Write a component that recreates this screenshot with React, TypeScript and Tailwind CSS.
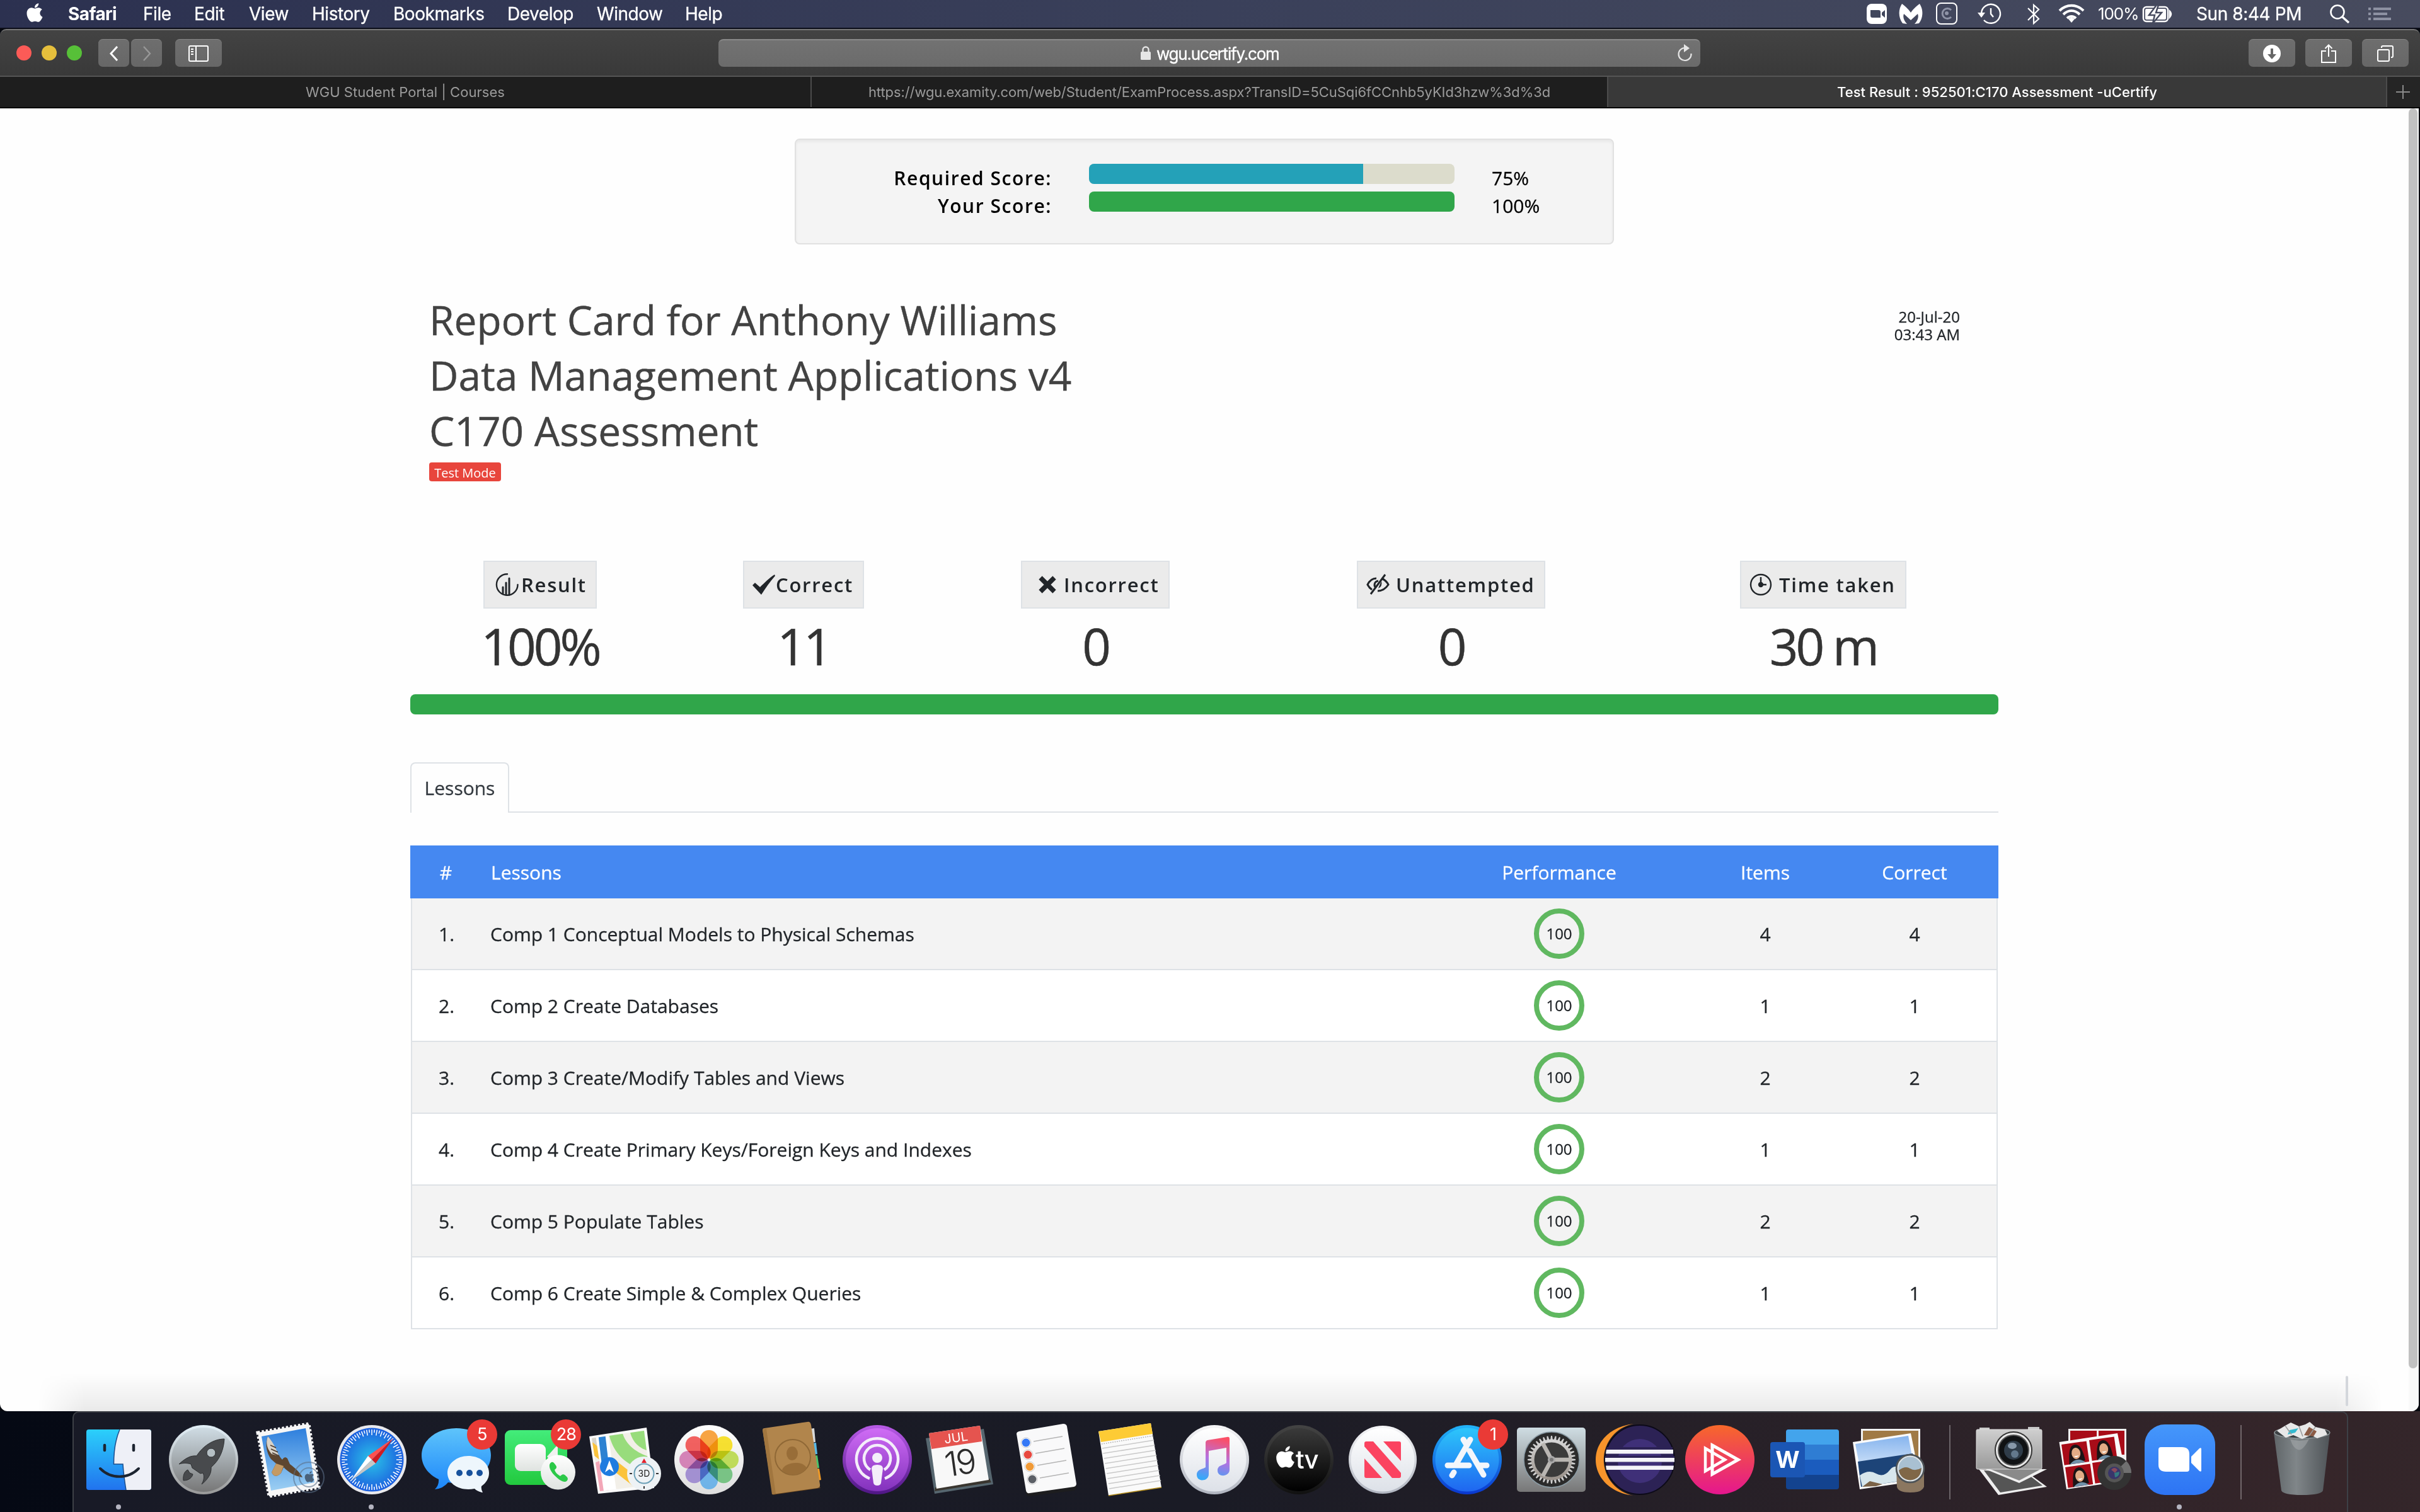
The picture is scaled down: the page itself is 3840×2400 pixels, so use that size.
import React from "react";
import { FaApple } from "react-icons/fa";

type Kids = { children?: React.ReactNode };

/* ---------- macOS menu bar ---------- */

const menus = [
  { label: "File", cls: "ml-[37px] w-[44px]" },
  { label: "Edit", cls: "ml-[37px] w-[49px]" },
  { label: "View", cls: "ml-[38px] w-[62px]" },
  { label: "History", cls: "ml-[38px] w-[91px]" },
  { label: "Bookmarks", cls: "ml-[38px] w-[143px]" },
  { label: "Develop", cls: "ml-[38px] w-[104px]" },
  { label: "Window", cls: "ml-[38px] w-[102px]" },
  { label: "Help", cls: "ml-[38px] w-[59px]" },
];

function MenuBar() {
  return (
    <div className="flex h-[46px] shrink-0 items-start border-b-2 border-[#0b0d18] bg-linear-to-r from-[#2c3150] via-[#3a405a] to-[#474b5e] text-[28px] leading-[44px] whitespace-nowrap text-white">
      <FaApple className="mt-[3px] ml-[40px] h-[34px] w-[30px]" />
      <span className="ml-[38px] w-[82px] font-bold tracking-[-0.6px]">Safari</span>
      {menus.map((m) => (
        <span key={m.label} className={`tracking-[-0.45px] [-webkit-text-stroke:0.3px] ${m.cls}`}>
          {m.label}
        </span>
      ))}
      <div className="flex-1" />
      <svg className="w-[370px] shrink-0" height="44" viewBox="2950 0 370 44" fill="none" stroke="#fff" strokeWidth="2">
        <rect x="2962" y="6" width="32" height="32" rx="8" fill="#fff" stroke="none" />
        <path d="M2968 16h13q3 0 3 3v9h-13q-3 0-3-3zM2986 20l5-4v12l-5-4z" fill="#40465c" stroke="none" />
        <path d="M3019 37c-7-9-7-22-1-31 3 2 10 8 14 14 4-6 11-12 14-14 6 9 6 22-1 31l-7 1c5-5 7-11 5-16l-11 10-11-10c-2 5 0 11 5 16z" fill="#fff" stroke="none" />
        <rect x="3073" y="5" width="32" height="33" rx="7" />
        <path d="M3096 16a8 8 0 1 0 0 11" stroke="#8e93a6" strokeWidth="3" />
        <circle cx="3089" cy="21" r="3" fill="#8e93a6" stroke="none" />
        <path d="M3144 21a15 15 0 1 1 4 11M3159 13v9l4 5" strokeWidth="2.4" />
        <path d="M3138 20h12l-6 8z" fill="#fff" stroke="none" />
        <path d="M3218 13l17 17-8 7V8l8 7-17 17" strokeWidth="2.2" />
        <path d="M3268 17c11-11 27-11 38 0M3274 23c8-8 18-8 26 0M3280 29c4-4 10-4 14 0" strokeWidth="4" />
        <path d="M3282 30l5 6 5-6q-5-4-10 0z" fill="#fff" stroke="none" />
      </svg>
      <span className="ml-[9px] w-[61px] text-[26px] tracking-[-1.100px]">100%</span>
      <svg className="w-[95px] shrink-0" height="44" viewBox="3390 0 95 44" fill="none" stroke="#fff" strokeWidth="2.5">
        <rect x="3401" y="11" width="39" height="23" rx="5" />
        <rect x="3404" y="14" width="33" height="17" rx="2" fill="#fff" stroke="none" />
        <path d="M3422 8l-12 16h9l-3 13 14-17h-9l4-12z" fill="#fff" stroke="#454a5e" strokeWidth="2.5" />
        <path d="M3443 18q4 4 0 9z" fill="#fff" />
      </svg>
      <span className="w-[172px] tracking-[-0.4px] [-webkit-text-stroke:0.3px]">Sun 8:44 PM</span>
      <svg className="mr-[40px] w-[143px] shrink-0" height="44" viewBox="3657 0 143 44" fill="none" stroke="#fff" strokeWidth="2.6">
        <circle cx="3709" cy="19" r="10.5" />
        <path d="M3717 27l10 9" strokeWidth="3.4" />
        <path d="M3758 14h4M3766 14h28M3758 22h4M3766 22h22M3758 30h4M3766 30h28" stroke="#8d91a2" strokeWidth="4" />
      </svg>
    </div>
  );
}

/* ---------- Safari chrome ---------- */

function ToolButton({ children, cls }: Kids & { cls: string }) {
  return (
    <div className={`flex h-[44px] items-center justify-center rounded-[7px] border-t border-[#858585] bg-linear-to-b from-[#6e6e6e] to-[#676767] ${cls}`}>
      {children}
    </div>
  );
}

function Toolbar() {
  return (
    <div className="flex h-[76px] shrink-0 items-center rounded-t-[10px] border-t-2 border-b-2 border-t-[#777] border-b-[#555] bg-linear-to-b from-[#434343] to-[#393939]">
      <span className="ml-[26px] size-[24px] rounded-full bg-[#fc5b57]" />
      <span className="ml-[16px] size-[24px] rounded-full bg-[#e5bf3c]" />
      <span className="ml-[16px] size-[24px] rounded-full bg-[#57c038]" />
      <ToolButton cls="ml-[26px] w-[49px]">
        <svg width="20" height="28" fill="none" stroke="#fff" strokeWidth="3"><path d="M15 3L5 14l10 11" /></svg>
      </ToolButton>
      <ToolButton cls="ml-[3px] w-[49px]">
        <svg width="20" height="28" fill="none" stroke="#989898" strokeWidth="2.4"><path d="M5 3l10 11L5 25" /></svg>
      </ToolButton>
      <ToolButton cls="ml-[21px] w-[74px]">
        <svg width="32" height="26" fill="none" stroke="#fff" strokeWidth="2"><rect x="1" y="1" width="30" height="24" rx="2" /><path d="M12 1v24M4 6h4M4 10h4M4 14h4" /></svg>
      </ToolButton>
      <div className="ml-[788px] flex h-[44px] w-[1558px] items-center rounded-[8px] border-t-2 border-[#8a8a8a] bg-linear-to-b from-[#727272] to-[#6b6b6b] text-[26px] text-white">
        <svg className="ml-[668px]" width="20" height="24"><rect x="2" y="9" width="16" height="13" rx="1.5" fill="#e6e6e6" /><path d="M5.500 10V6a4.500 4.500 0 0 1 9 0v4" fill="none" stroke="#e6e6e6" strokeWidth="2.4" /></svg>
        <span className="ml-[7px] w-[201px] tracking-[-1.200px] [-webkit-text-stroke:0.3px]">wgu.ucertify.com</span>
        <svg className="ml-[623px]" width="30" height="32" fill="none" stroke="#e6e6e6" strokeWidth="2.2"><path d="M24.500 16a10 10 0 1 1-10-9" /><path d="M13 1l9 6.500-9 6.500z" fill="#e6e6e6" stroke="none" /></svg>
      </div>
      <ToolButton cls="ml-[870px] w-[74px]">
        <svg width="28" height="28"><circle cx="14" cy="14" r="14" fill="#fff" /><path d="M12 6h4v9h5l-7 8-7-8h5z" fill="#666" /></svg>
      </ToolButton>
      <ToolButton cls="ml-[16px] w-[74px]">
        <svg width="26" height="32" fill="none" stroke="#fff" strokeWidth="2"><path d="M9 12H2v18h22V12h-7M13 21V3M7.500 8L13 2.500 18.500 8" /></svg>
      </ToolButton>
      <ToolButton cls="ml-[16px] w-[74px]">
        <svg width="28" height="28" fill="none" stroke="#fff" strokeWidth="2"><rect x="2" y="8" width="18" height="18" rx="2" /><path d="M8 5V4q0-2 2-2h14q2 0 2 2v14q0 2-2 2h-1" /></svg>
      </ToolButton>
    </div>
  );
}

function TabStrip() {
  return (
    <div className="flex h-[50px] shrink-0 border-b-2 border-black bg-[#1e1e1e] text-center text-[22px] leading-[48px] whitespace-nowrap text-[#9b9b9b]">
      <div className="w-[1288px] border-r-2 border-[#4b4b4b] tracking-[0.050px]">WGU Student Portal | Courses</div>
      <div className="w-[1264px] border-r-2 border-[#4b4b4b] tracking-[-0.08px]">https://wgu.examity.com/web/Student/ExamProcess.aspx?TransID=5CuSqi6fCCnhb5yKId3hzw%3d%3d</div>
      <div className="w-[1236px] border-r-2 border-[#4b4b4b] bg-[#393939] font-medium tracking-[0.020px] text-white">Test Result : 952501:C170 Assessment -uCertify</div>
      <div className="flex flex-1 items-center justify-center bg-[#252525] pr-[2px]">
        <svg width="24" height="24" stroke="#8a8a8a" strokeWidth="2"><path d="M12 1v22M1 12h22" /></svg>
      </div>
    </div>
  );
}

/* ---------- Report card ---------- */

function ScoreRow({ label, value, pct, bar }: { label: string; value: string; pct: number; bar: string }) {
  return (
    <div className="flex h-[44px] text-[30px] leading-[46px] text-black">
      <span className="w-[406px] text-right font-semibold tracking-[1.550px]">{label}</span>
      <div className="ml-[59px] h-[32px] w-[580px] overflow-hidden rounded-[8px] bg-[#dcdccc]">
        <div className={`h-full ${bar}`} style={{ width: `${pct}%` }} />
      </div>
      <span className="ml-[59px] [-webkit-text-stroke:0.3px]">{value}</span>
    </div>
  );
}

const ink = "#212529";

const stats = [
  {
    label: "Result",
    value: "100%",
    box: "ml-[116px] w-[180px]",
    gap: "ml-[3px]",
    icon: (
      <svg className="ml-[4px]" width="38" height="38" fill="none" stroke={ink} strokeWidth="2.4" strokeLinecap="round"><path d="M19 2.200A16.800 16.800 0 1 0 35.500 19" /><path d="M12 33v-10M17 35V16M22 35V9" strokeWidth="3" /></svg>
    ),
  },
  {
    label: "Correct",
    value: "11",
    box: "ml-[232px] w-[192px]",
    gap: "ml-0",
    icon: <svg width="37" height="34"><path d="M0 18l4-4 8 7C19 14 27 6 35 1l1 2C28 12 21 22 14 33z" fill={ink} /></svg>,
  },
  {
    label: "Incorrect",
    value: "0",
    box: "ml-[249px] w-[236px]",
    gap: "ml-[11px]",
    icon: <svg className="ml-[13px]" width="29" height="28" stroke={ink} strokeWidth="7.500"><path d="M3 3l22 22M25 3L3 25" /></svg>,
  },
  {
    label: "Unattempted",
    value: "0",
    box: "ml-[297px] w-[299px]",
    gap: "ml-[9px]",
    icon: (
      <svg width="38" height="36" fill="none" stroke={ink} strokeWidth="3"><path d="M16 8C10 8 5 12 2 18c2 4 4 6 7 8M24 8c5 2 9 6 11 10-4 6-10 10-17 10M30 2L7 33M19 12c-7 1-7 8-4 11" /><path d="M19 24q7-3 5-12z" fill={ink} stroke="none" /></svg>
    ),
  },
  {
    label: "Time taken",
    value: "30 m",
    box: "ml-[309px] w-[264px]",
    gap: "ml-[11px]",
    icon: <svg width="36" height="36" fill="none" stroke={ink} strokeWidth="2.4"><circle cx="18" cy="18" r="16" /><path d="M18 6v12h9" strokeWidth="2.500" /><circle cx="18" cy="18" r="3" fill={ink} /></svg>,
  },
];

const lessons = [
  { name: "Comp 1 Conceptual Models to Physical Schemas", n: 4 },
  { name: "Comp 2 Create Databases", n: 1 },
  { name: "Comp 3 Create/Modify Tables and Views", n: 2 },
  { name: "Comp 4 Create Primary Keys/Foreign Keys and Indexes", n: 1 },
  { name: "Comp 5 Populate Tables", n: 2 },
  { name: "Comp 6 Create Simple & Complex Queries", n: 1 },
];

function Report() {
  return (
    <div className="flex w-[3822px] flex-col pl-[651px] font-['Open_Sans',sans-serif] text-[#212529]">
      <div className="mt-[48px] ml-[610px] h-[168px] w-[1300px] rounded-[8px] border-2 border-[#e1e1e1] bg-[#f4f4f4] pt-[38px] shadow-[inset_0_3px_4px_rgba(0,0,0,0.05)]">
        <ScoreRow label="Required Score:" value="75%" pct={75} bar="bg-[#24a1b8]" />
        <ScoreRow label="Your Score:" value="100%" pct={100} bar="bg-[#30a64a]" />
      </div>

      <div className="mt-[76px] flex h-[300px] w-[2520px] justify-between pr-[61px] pl-[30px]">
        <div>
          <h1 className="text-[64px] leading-[88px] text-[#424242] [-webkit-text-stroke:0.4px]">
            Report Card for Anthony Williams
            <br />
            Data Management Applications v4
            <br />
            C170 Assessment
          </h1>
          <span className="mt-[6px] block h-[30px] w-[114px] rounded-[4px] bg-[#e8453c] text-center text-[20px] leading-[33px] text-white">Test Mode</span>
        </div>
        <div className="mt-[25px] text-right text-[24px] leading-[28px] [-webkit-text-stroke:0.3px]">
          20-Jul-20
          <br />
          03:43 AM
        </div>
      </div>

      <div className="mt-[126px] flex w-[2520px]">
        {stats.map((s) => (
          <div key={s.label} className={`flex flex-col items-center ${s.box}`}>
            <div className="flex h-[76px] w-full items-center border-2 border-[#dee2e6] bg-[#ebebeb] pl-[13px] whitespace-nowrap">
              {s.icon}
              <span className={`text-[31px] leading-[72px] font-semibold tracking-[1.750px] ${s.gap}`}>{s.label}</span>
            </div>
            <span className="mt-[11px] text-[80px] leading-[96px] tracking-[-4px] whitespace-nowrap text-[#333] [-webkit-text-stroke:0.5px]">{s.value}</span>
          </div>
        ))}
      </div>
      <div className="mt-[29px] h-[32px] w-[2520px] rounded-[8px] bg-[#30a64a]" />

      <div className="mt-[76px] flex h-[80px] w-[2520px]">
        <div className="w-[157px] rounded-t-[8px] border-2 border-b-0 border-[#dee2e6] text-center text-[30px] leading-[78px] text-[#343a40] [-webkit-text-stroke:0.3px]">Lessons</div>
        <div className="flex-1 border-b-2 border-[#dee2e6]" />
      </div>

      <div className="mt-[52px] w-[2520px] [-webkit-text-stroke:0.3px]">
        <div className="grid h-[84px] grid-cols-[113px_1487px_446px_208px_266px] items-center bg-[#4588f1] text-center text-[30px] text-white">
          <span>#</span>
          <span className="pl-[15px] text-left">Lessons</span>
          <span>Performance</span>
          <span>Items</span>
          <span>Correct</span>
        </div>
        {lessons.map((l, i) => (
          <div
            key={l.name}
            className="mx-px grid h-[114px] grid-cols-[109px_1488px_446px_208px_266px] items-center border-x-2 border-b-2 border-[#dee2e6] text-center text-[30px] odd:bg-white even:bg-[#f3f3f3]"
          >
            <span>{i + 1}.</span>
            <span className="pl-[15px] text-left">{l.name}</span>
            <span className="mx-auto flex size-[80px] items-center justify-center rounded-full border-8 border-[#60b860] text-[24px]">100</span>
            <span>{l.n}</span>
            <span>{l.n}</span>
          </div>
        ))}
      </div>
    </div>
  );
}

/* ---------- Dock ---------- */

function Slot({ children, badge, dot }: Kids & { badge?: string; dot?: boolean }) {
  return (
    <div className="relative h-[158px] w-[133.700px] shrink-0">
      <svg width="134" height="158" viewBox="0 0 134 158" className="overflow-visible">
        {children}
        {dot && <circle cx="66" cy="150" r="4" fill="#b4b4c0" />}
      </svg>
      {badge && (
        <span className="absolute top-[11px] left-[84px] size-[48px] rounded-full bg-[#ea3a36] text-center text-[27px] leading-[48px] tracking-[-1px] text-white">{badge}</span>
      )}
    </div>
  );
}

function Divider() {
  return (
    <div className="flex w-[61px] shrink-0 justify-center pt-[20px]">
      <div className="h-[118px] w-[2px] bg-white/30" />
    </div>
  );
}

function Grad({ id, a, b }: { id: string; a: string; b: string }) {
  return (
    <linearGradient id={id} x1="0" y1="0" x2="0" y2="1">
      <stop offset="0" stopColor={a} />
      <stop offset="1" stopColor={b} />
    </linearGradient>
  );
}

const ticks = Array.from({ length: 72 }, (_, i) => i * 5);
const teeth = Array.from({ length: 36 }, (_, i) => i * 10);
const petals = ["#f79a2e", "#f5dd1a", "#b9d84a", "#6cbf7a", "#62aee8", "#9a86cf", "#d178b0", "#f0504e"];

function Finder() {
  return (
    <Slot dot>
      <defs><Grad id="fi" a="#2bd0fb" b="#2173ee" /></defs>
      <rect x="15" y="27" width="103" height="96" rx="4" fill="url(#fi)" />
      <path d="M68 27h46q4 0 4 4v88q0 4-4 4H78c-2-12-4-26-5-41H58.500c0-20 3-40 9.500-55z" fill="#eef0f7" />
      <path d="M68 27c-6.500 15-9.500 35-9.500 55H73c1 15 3 29 5 41" fill="none" stroke="#1c4e8c" strokeWidth="1.500" />
      <path d="M44 52v8M90 52v8" stroke="#1c2430" strokeWidth="4.500" strokeLinecap="round" />
      <path d="M37 89c17 17 44 17 61 0" fill="none" stroke="#1c2430" strokeWidth="4" strokeLinecap="round" />
    </Slot>
  );
}

function Launchpad() {
  return (
    <Slot>
      <defs><Grad id="lp" a="#cfdce4" b="#777" /><Grad id="lp2" a="#e2eff7" b="#999" /></defs>
      <circle cx="67" cy="75" r="55" fill="url(#lp2)" />
      <circle cx="67" cy="75" r="51" fill="url(#lp)" />
      <path d="M100 42C83 42 66 53 56 69c-9-1-17 3-28 13 6-2 13-2 19 0l2 6 13 9 4-1c3 6 1 13-2 18 10-8 16-17 15-27 14-12 20-28 21-45z" fill="#484a4d" stroke="#2e3032" />
      <circle cx="79" cy="64" r="7" fill="#b5bfc4" stroke="#2e3032" />
      <path d="M42 91c-5 2-8 8-7 17 9 0 14-5 15-10l-5-2z" fill="#484a4d" stroke="#2e3032" />
    </Slot>
  );
}

function Mail() {
  return (
    <Slot>
      <defs><Grad id="ma" a="#2e7fdd" b="#9ccff3" /></defs>
      <path d="M20 32L101 18l16 101-79 14z" fill="#f7f7f7" stroke="#f7f7f7" strokeWidth="5" strokeDasharray="3.500 3" />
      <path d="M26 38l70-13 14 86-69 13z" fill="url(#ma)" />
      <path d="M36 38c-5 12-2 26 5 36l8 7-7 14c3 7 9 8 15 1l4-9c8 8 17 14 30 16-4-8-12-15-20-21l-4-9c-3-3-6-2-8 2-8-8-11-22-23-37z" fill="#5d4630" />
      <path d="M36 38c-4 10-1 20 6 28l12 3c-5-10-8-20-18-31z" fill="#d8d2c8" />
      <path d="M40 52l9 4M41 58l11 5M43 64l11 5" stroke="#4a3a2c" strokeWidth="1.500" />
      <path d="M49 81l-7 14c3 7 9 8 15 1l4-11z" fill="#c49a64" />
      <g fill="none" stroke="#5b7088" opacity=".6" strokeWidth="2"><circle cx="101" cy="103" r="15" /><circle cx="101" cy="103" r="24" /></g>
      <FaApple x="92" y="92" size={20} color="#49627c" />
    </Slot>
  );
}

function Safari() {
  return (
    <Slot dot>
      <defs><radialGradient id="sa"><stop offset="0" stopColor="#2ac4e8" /><stop offset="1" stopColor="#1c5fdf" /></radialGradient></defs>
      <circle cx="67" cy="75" r="55" fill="#e9e9ec" />
      <circle cx="67" cy="75" r="50.500" fill="url(#sa)" />
      {ticks.map((a, i) => (
        <path key={a} d={i % 2 ? "M67 27v5" : "M67 27v9"} stroke="#fff" strokeWidth="1.500" transform={`rotate(${a} 67 75)`} />
      ))}
      <path d="M101 41L61 69l6 6z" fill="#ff5150" />
      <path d="M101 41L73 81l-6-6z" fill="#cf1c22" />
      <path d="M33 109l28-40 6 6z" fill="#fff" />
      <path d="M33 109l40-28-6-6z" fill="#c6c6c6" />
    </Slot>
  );
}

function Messages() {
  return (
    <Slot badge="5">
      <defs><Grad id="ms" a="#5ec4fb" b="#1c86fa" /></defs>
      <path d="M67 25c31 0 55 19 55 43s-24 44-55 44q-7 0-13-1-8 10-21 11 7-7 6-16C22 98 12 84 12 68c0-24 24-43 55-43z" fill="url(#ms)" />
      <path d="M86 69c19 0 33 12 33 27 0 9-5 16-12 21q-1 5 2 10-8-1-13-6-5 1-10 1c-18 0-33-11-33-26s15-27 33-27z" fill="#eef6fc" />
      <g fill="#17519c"><circle cx="72" cy="96" r="5" /><circle cx="88" cy="96" r="5" /><circle cx="104" cy="96" r="5" /></g>
    </Slot>
  );
}

function FaceTime() {
  return (
    <Slot badge="28">
      <defs><Grad id="ft" a="#43ec7a" b="#22c93e" /><Grad id="ftc" a="#fff" b="#dfe3e0" /></defs>
      <rect x="11" y="28" width="99" height="87" rx="9" fill="url(#ft)" />
      <rect x="27" y="50" width="49" height="43" rx="9" fill="url(#ftc)" />
      <path d="M78 70l17-19v40z" fill="#f0f2f0" />
      <circle cx="95.500" cy="95" r="27.500" fill="url(#ftc)" />
      <path d="M85 79c-6 3-3 13 5 21s16 13 20 8c2-3 1-5-4-9-3-2-5 0-7 2-5-3-8-6-9-10 3-2 4-4 2-7-3-5-5-6-7-5z" fill="#2bc948" />
    </Slot>
  );
}

function Maps() {
  return (
    <Slot>
      <path d="M11 38l91-14 12 96-89 9z" fill="#fafafa" />
      <clipPath id="mp"><path d="M15 41l83-12 11 86-81 10z" /></clipPath>
      <g clipPath="url(#mp)">
        <path d="M0 20h130v120H0z" fill="#f2efe8" />
        <path d="M40 20h22c0 24 18 44 50 52v22C70 88 44 64 40 20z" fill="#98dc7c" />
        <path d="M74 20h40v42c-24-2-38-16-40-42z" fill="#98dc7c" />
        <path d="M10 40h20v16H10z" fill="#d8d5cc" />
        <path d="M10 84l24-10 10 64H10z" fill="#f3a7b8" />
        <path d="M10 52l92 72" stroke="#fbc33b" strokeWidth="15" />
        <path d="M30 28l16 110" stroke="#fff" strokeWidth="20" />
        <path d="M30 28l7 60" stroke="#2d82d2" strokeWidth="11" />
      </g>
      <circle cx="43" cy="86" r="15" fill="#1f7ce0" />
      <path d="M43 76l7 19-7-5-7 5z" fill="#fff" />
      <circle cx="98" cy="97" r="27" fill="#eef2f5" />
      <circle cx="98" cy="97" r="15.500" fill="none" stroke="#6b9fb6" strokeWidth="2" />
      <text x="98" y="102" textAnchor="middle" fill="#222" className="text-[14px]">3D</text>
      <path d="M98 73l4 7h-8z" fill="#e4202c" />
      <path d="M98 117v4M75 97h4M117 97h4" stroke="#333" strokeWidth="2" />
    </Slot>
  );
}

function Photos() {
  return (
    <Slot>
      <defs><Grad id="ph" a="#fff" b="#dedede" /></defs>
      <circle cx="67" cy="75" r="55" fill="url(#ph)" />
      <g className="isolate">
        {petals.map((c, i) => (
          <rect key={c} x="53" y="28" width="28" height="45" rx="14" fill={c} opacity=".9" className="mix-blend-multiply" transform={`rotate(${i * 45} 67 75)`} />
        ))}
      </g>
    </Slot>
  );
}

function Contacts() {
  return (
    <Slot>
      <path d="M93 26l7-1 2 22-7 1z" fill="#d9d9d9" />
      <path d="M95 49l8-1 2 18-8 1z" fill="#59b8e6" />
      <path d="M97 69l8-1 3 20-9 1z" fill="#4bc46b" />
      <path d="M99 90l9-1 3 18-9 2z" fill="#f09a26" />
      <path d="M34 131l76-11-4-6-70 10z" fill="#5b3d1c" />
      <path d="M18 28q0-3 3-3l68-10q5-1 6 5l14 94q1 5-4 6l-71 10z" fill="#b1854c" />
      <path d="M18 27l6-1 15 103-6 1z" fill="#a1763f" />
      <circle cx="66" cy="71" r="28" fill="none" stroke="#8f6836" strokeWidth="2" />
      <ellipse cx="65" cy="65" rx="9" ry="11" fill="#986d38" />
      <path d="M49 91c4-12 32-16 39-3-8 13-30 15-39 3z" fill="#986d38" />
    </Slot>
  );
}

function Podcasts() {
  return (
    <Slot>
      <defs><Grad id="pc" a="#cf6cf5" b="#8332bd" /><Grad id="pc2" a="#b85be6" b="#4f1686" /></defs>
      <circle cx="67" cy="75" r="55" fill="url(#pc2)" />
      <circle cx="67" cy="75" r="50" fill="url(#pc)" />
      <g fill="none" stroke="#f4eefa" strokeWidth="4.500">
        <path d="M55 105A33 33 0 1 1 79 105" />
        <path d="M56 91A21 21 0 1 1 78 91" />
      </g>
      <circle cx="67" cy="72" r="8" fill="#f4eefa" />
      <path d="M58 89q0-6 9-6t9 6l-3 23q-1 4-6 4t-6-4z" fill="#f4eefa" />
    </Slot>
  );
}

function Calendar() {
  return (
    <Slot>
      <path d="M10 41l92-15 15 88-93 15z" fill="#56666f" />
      <path d="M24 125l90-14-3-6-86 14z" fill="#39352f" />
      <path d="M15 33l81-12 14 86-83 14z" fill="#f8f8f8" />
      <path d="M15 33l81-12 3 25-80 12z" fill="#e5544f" />
      <text x="58" y="47" textAnchor="middle" fill="#fff" transform="rotate(-8 58 40)" className="text-[20px]">JUL</text>
      <text x="64" y="99" textAnchor="middle" fill="#2b2b2b" transform="rotate(-8 64 82)" className="text-[54px] font-light tracking-[-3px]">19</text>
    </Slot>
  );
}

function Reminders() {
  return (
    <Slot>
      <path d="M24 38l76-12 15 92q1 5-4 6l-71 9q-4 0-5-5z" fill="#1d1d1f" />
      <path d="M20 34q0-3 4-4l70-12q5 0 6 4l15 91q0 4-4 5l-70 10q-5 1-6-4z" fill="#f9f9fa" />
      {[["#3478f6", 35, 48], ["#e8483f", 38, 67], ["#f09a37", 41, 86], ["#5b5f66", 45, 106]].map(([c, x, y]) => (
        <g key={c}>
          <circle cx={x} cy={y} r="8" fill="none" stroke="#ccc" />
          <circle cx={x} cy={y} r="6.500" fill={c as string} />
          <path d={`M${Number(x) + 12} ${Number(y) - 2}l46-8`} stroke="#b4b4b4" strokeWidth="1.500" />
        </g>
      ))}
    </Slot>
  );
}

function Notes() {
  return (
    <Slot>
      <path d="M17 30l83-13 17 102-84 13z" fill="#fafafa" />
      <path d="M17 30l83-13 3 17-82 13z" fill="#fdcb35" />
      <path d="M22 50l82-13" stroke="#a8a8a8" strokeWidth="1.500" strokeDasharray="1.500 2" />
      {[0, 1, 2, 3, 4, 5, 6, 7, 8].map((i) => (
        <path key={i} d={`M${23 + i * 1.4} ${57 + i * 8}l82-13`} stroke="#c9c9c9" strokeWidth="1.500" />
      ))}
      <path d="M33 132l84-13" stroke="#b48d1c" strokeWidth="1.500" />
    </Slot>
  );
}

function Music() {
  return (
    <Slot>
      <defs><Grad id="mu" a="#fff" b="#dde1e8" /><Grad id="mu3" a="#f5f5f7" b="#b0b5c0" /><linearGradient id="mu2" x1=".6" y1="0" x2=".4" y2="1"><stop offset="0" stopColor="#fb4f66" /><stop offset=".5" stopColor="#b571e0" /><stop offset="1" stopColor="#38a8f8" /></linearGradient></defs>
      <circle cx="67" cy="75" r="55" fill="url(#mu3)" />
      <circle cx="67" cy="75" r="50.500" fill="url(#mu)" />
      <path d="M53 48q0-3 3-4l31-5q4-1 4 3v49c0 11-19 13-19 1 0-9 10-8 14-12V56l-28 5v37c0 12-19 13-19 1 0-9 10-9 14-12z" fill="url(#mu2)" />
    </Slot>
  );
}

function AppleTV() {
  return (
    <Slot>
      <defs><Grad id="tv" a="#3a3a3a" b="#000" /><Grad id="tv2" a="#444" b="#111" /></defs>
      <circle cx="67" cy="75" r="55" fill="url(#tv2)" />
      <circle cx="67" cy="75" r="50" fill="url(#tv)" />
      <FaApple x="26" y="51" size={39} color="#fff" />
      <text x="62" y="89" fill="#fff" className="text-[40px] font-medium tracking-[-1px]">tv</text>
    </Slot>
  );
}

function News() {
  return (
    <Slot>
      <circle cx="67" cy="75" r="54" fill="url(#mu3)" />
      <circle cx="67" cy="75" r="50.500" fill="url(#mu)" />
      <path d="M38 49q0-3 3-3h11l44 50v5q0 3-3 3H82L38 54z" fill="#fb4360" />
      <path d="M68 46h25q3 0 3 3v28zM38 73l28 31H41q-3 0-3-3z" fill="#fb4360" />
    </Slot>
  );
}

function AppStore() {
  return (
    <Slot badge="1">
      <defs><Grad id="as" a="#2cc6fb" b="#1f66f0" /><Grad id="as2" a="#22b4f8" b="#0a37cf" /></defs>
      <circle cx="67" cy="75" r="55" fill="url(#as2)" />
      <circle cx="67" cy="75" r="50.500" fill="url(#as)" />
      <g stroke="#f3f6fb" strokeWidth="9" strokeLinecap="round"><path d="M72 43L49 83M61 43l5 8M71 61l22 38M36 84h34M86 84h12M46 95l-3 5" /></g>
    </Slot>
  );
}

function Settings() {
  return (
    <Slot>
      <defs><Grad id="se" a="#cfdde3" b="#777" /><Grad id="se2" a="#d5d5d5" b="#9a928b" /></defs>
      <rect x="12" y="24" width="109" height="102" rx="5" fill="url(#se)" />
      <circle cx="67" cy="75" r="44" fill="#2b2b2b" stroke="#8a9aa3" strokeWidth="1.500" />
      {teeth.map((a) => (
        <path key={a} d="M65 44l1-7h2l1 7z" fill="#cfcfcf" transform={`rotate(${a} 67 75)`} />
      ))}
      <circle cx="67" cy="75" r="30" fill="#3b3b3b" stroke="url(#se2)" strokeWidth="5" />
      <path d="M67 75h29M67 75L53 49M67 75L53 101" stroke="#b9b6b2" strokeWidth="6.500" />
      <circle cx="67" cy="75" r="6" fill="#a9a9a9" />
      <circle cx="67" cy="75" r="3" fill="#777" />
    </Slot>
  );
}

function Eclipse() {
  return (
    <Slot>
      <path d="M64 18a58 58 0 0 0 0 114C-16 122-16 28 64 18z" fill="#f7942b" />
      <circle cx="74" cy="75" r="55" fill="#2c2255" stroke="#0c0a18" strokeWidth="2" />
      <circle cx="74" cy="77" r="35" fill="#463584" opacity=".75" />
      <path d="M22 55h104v8H20zM19 69h110v10H19z" fill="#2c2255" />
      <path d="M21 59h106v6.500H20zM19 72h110v6.500H19zM20 84.500h108l-1 6.500H21z" fill="#f4f4f8" />
    </Slot>
  );
}

function Pluralsight() {
  return (
    <Slot>
      <defs><Grad id="pl" a="#f7682a" b="#e5168f" /></defs>
      <circle cx="67" cy="75" r="55" fill="url(#pl)" />
      <path d="M55 52v46l41-23z" fill="none" stroke="#fff" strokeWidth="5" />
      <path d="M44 57v36l31-18z" fill="none" stroke="#fff" strokeWidth="4.500" />
    </Slot>
  );
}

function Word() {
  return (
    <Slot>
      <rect x="38" y="27" width="84" height="95" rx="4" fill="#13438f" />
      <path d="M38 75h84v24H38z" fill="#1b5cbe" />
      <path d="M38 51h84v24H38z" fill="#2f7dd3" />
      <path d="M38 51V31q0-4 4-4h76q4 0 4 4v20z" fill="#43a4ec" />
      <rect x="13" y="47" width="55" height="56" rx="4" fill="#1b56b4" />
      <text x="40.500" y="88" textAnchor="middle" fill="#fff" className="text-[37px] font-bold">W</text>
    </Slot>
  );
}

function Preview() {
  return (
    <Slot>
      <defs><Grad id="pv" a="#86b4ee" b="#cfe2f8" /></defs>
      <path d="M24 26h94v84H24z" fill="#f2f2f2" />
      <path d="M27 29h88v80H27z" fill="#a07a45" />
      <path d="M11 47l92-14 15 75-96 14z" fill="#fafafa" />
      <path d="M15 50l84-13 7 38-84 12z" fill="url(#pv)" />
      <path d="M19 78l87-13 8 40-90 13z" fill="#1d4478" />
      <path d="M22 100q14-10 26-3t22-6 26 8l14 6-84 13z" fill="#d7e6ec" />
      <path d="M26 118l12-9 20 5-10 3z" fill="#7b6247" />
      <path d="M80 89l1 29q2 9 21 9t22-9V89z" fill="#8b7760" />
      <circle cx="102" cy="89" r="21.500" fill="#a9c0d2" stroke="#4d5357" strokeWidth="3.500" />
      <path d="M84 92q10-8 18-3t18-1q-2 20-18 21-15-1-18-17z" fill="#806747" />
      <circle cx="102" cy="89" r="19.500" fill="none" stroke="#dfe5e8" strokeWidth="2" />
    </Slot>
  );
}

function ImageCapture() {
  return (
    <Slot>
      <defs><Grad id="ic" a="#cfcfcf" b="#999" /></defs>
      <path d="M16 90l31 41 77-13-30-22z" fill="#eee" />
      <path d="M24 92l26 35 67-11-26-20z" fill="#555" />
      <path d="M24 89l56 23 44-22z" fill="#f0f0f0" />
      <path d="M34 90l46 18 34-18z" fill="#8a8a8a" />
      <path d="M17 24h16v5H17zM94 23h18v5H94z" fill="#c9c9c9" />
      <rect x="12" y="27" width="104" height="63" rx="2" fill="url(#ic)" stroke="#ddd" />
      <circle cx="71" cy="60" r="29" fill="#e9e9e9" stroke="#333" strokeWidth="2" />
      <circle cx="71" cy="60" r="24" fill="#101214" stroke="#555" strokeWidth="2" />
      <circle cx="71" cy="60" r="15" fill="#2f3c49" />
      <ellipse cx="69" cy="53" rx="7" ry="5" fill="#8798aa" />
      <circle cx="73" cy="66" r="6" fill="#63788c" />
    </Slot>
  );
}

function Portrait({ x, y }: { x: number; y: number }) {
  return (
    <g transform={`translate(${x} ${y}) rotate(-8)`}>
      <path d="M0 0h40v33H0z" fill="#a80c18" />
      <path d="M8 33C10 14 12 3 21 3s12 13 13 27z" fill="#1b1416" />
      <ellipse cx="21" cy="17" rx="7" ry="9" fill="#e2ac86" />
      <path d="M17 21q4 4 8 0z" fill="#fff" />
      <path d="M9 33q12-12 25 0z" fill="#6f90a8" />
    </g>
  );
}

function PhotoBooth() {
  return (
    <Slot>
      <path d="M24 26h92v70H24z" fill="#f0f0f0" />
      <path d="M27 29h42v60H27zM72 29h41v38H72z" fill="#a80c18" />
      <path d="M9.500 47L102 33l15 75-96 14z" fill="#fafafa" />
      <Portrait x={13} y={51} />
      <Portrait x={57} y={44} />
      <Portrait x={19} y={87} />
      <Portrait x={62} y={80} />
      <circle cx="97" cy="96" r="27" fill="#333" />
      <path d="M97 96l19-19a27 27 0 0 1 8 19z" fill="#707070" />
      <circle cx="97" cy="96" r="15" fill="#555" />
      <circle cx="97" cy="96" r="10" fill="#39356a" />
      <path d="M92 91q5-6 10 0l-4 5z" fill="#8a4a5c" />
      <path d="M97 96l8-2q0 8-7 9z" fill="#357a80" />
    </Slot>
  );
}

function Zoom() {
  return (
    <Slot dot>
      <defs><Grad id="zo" a="#4597fb" b="#2d74f4" /></defs>
      <rect x="11" y="19" width="112" height="112" rx="32" fill="url(#zo)" />
      <path d="M33 59q0-4 4-4h33q12 0 12 11v24q0 4-4 4H45q-12 0-12-11zM85 70l13-13q3-2 3 1v34q0 3-3 1L85 80z" fill="#fff" />
    </Slot>
  );
}

function Trash() {
  return (
    <Slot>
      <defs><linearGradient id="tr"><stop offset="0" stopColor="#62696c" /><stop offset=".4" stopColor="#848b8e" /><stop offset="1" stopColor="#50565a" /></linearGradient></defs>
      <path d="M22 32q45-16 89 0l-11 92q-3 7-33 7t-33-7z" fill="url(#tr)" opacity=".95" />
      <ellipse cx="67" cy="32" rx="44" ry="9" fill="#3b4043" stroke="#8f979a" strokeWidth="1.500" />
      <path d="M27 29l13-8 9-5 13 6 10-3 7-4 9 8 15 4 4 8-16 6-10-5-14 6-14-6-12 4z" fill="#e8e8e8" />
      <path d="M47 28l14-3-5 7-12 3z" fill="#35b9cf" />
      <path d="M70 36l8-13 12 7-5 8z" fill="#8b5a44" />
      <path d="M40 21l10 14M62 22l6 16M88 23l-10 14" stroke="#999" strokeWidth="1.500" />
      <path d="M48 42q14 6 30 0-10 20-18 17T48 42z" fill="#a9aeb0" opacity=".5" />
    </Slot>
  );
}

function Dock() {
  return (
    <div className="flex h-[160px] shrink-0 bg-linear-to-r from-[#050914] via-[#121018] to-[#34262a]">
      <div className="ml-[115px] flex h-[162px] w-[3611px] rounded-t-[10px] border-2 border-b-0 border-[#3d4046] bg-linear-to-r from-[#181a26] via-[#1a1b25] to-[#36262a] pl-[5px]">
        <Finder /><Launchpad /><Mail /><Safari /><Messages /><FaceTime /><Maps /><Photos /><Contacts /><Podcasts /><Calendar />
        <Reminders /><Notes /><Music /><AppleTV /><News /><AppStore /><Settings /><Eclipse /><Pluralsight /><Word /><Preview />
        <Divider />
        <ImageCapture /><PhotoBooth /><Zoom />
        <Divider />
        <Trash />
      </div>
    </div>
  );
}

export default function App() {
  return (
    <div className="flex h-[2400px] w-[3840px] flex-col overflow-hidden bg-[#07090f] font-['Inter',sans-serif]">
      <MenuBar />
      <Toolbar />
      <TabStrip />
      <div className="relative mr-[2px] flex h-[2068px] shrink-0 justify-between overflow-hidden rounded-b-[12px] bg-[#fefefe]">
        <Report />
        <div className="w-[16px] bg-[#f9f9f9]">
          <div className="h-[2000px] w-[14px] rounded-[7px] bg-[#c1c1c1]" />
        </div>
        <div className="absolute bottom-0 left-[60px] h-[60px] w-[3720px] bg-linear-to-b from-transparent to-black/8 mask-x-from-98% mask-x-to-100%" />
        <div className="absolute right-[112px] bottom-[8px] h-[48px] w-[4px] rounded-full bg-[#d4d7dc]" />
      </div>
      <Dock />
    </div>
  );
}
